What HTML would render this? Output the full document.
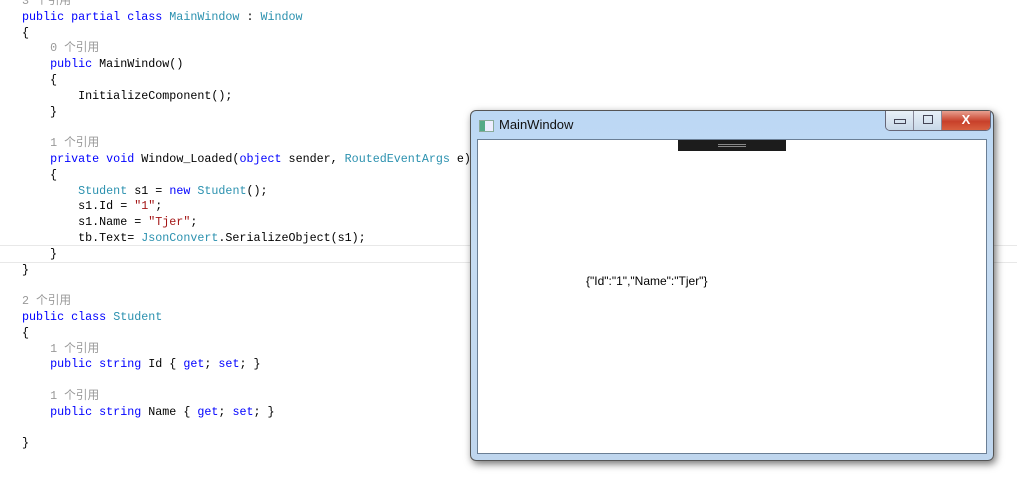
<!DOCTYPE html>
<html><head><meta charset="utf-8"><style>
body{margin:0;width:1017px;height:489px;background:#fff;overflow:hidden;position:relative;font-family:"Liberation Mono","Noto Sans CJK SC",monospace;}
.code{position:absolute;left:22px;top:-6px;font-size:11.7px;line-height:15.8px;white-space:pre;color:#000;}
.k{color:#0000ff}.t{color:#2b91af}.s{color:#a31515}.r{color:#999;font-family:"Liberation Mono","Noto Sans CJK SC",monospace}
.hl{position:absolute;left:0;top:245px;width:1017px;height:16px;border-top:1px solid #e8e8e8;border-bottom:1px solid #e8e8e8;}
.win{position:absolute;left:470px;top:110px;width:522px;height:349px;border-radius:6px;background:linear-gradient(#bcd8f4,#c6dcf2 40%,#bfd6ee);border:1px solid #555;box-shadow:2px 3px 8px rgba(0,0,0,.55);}
.client{position:absolute;left:6px;top:28px;width:508px;height:313px;background:#fff;border:1px solid #6b7f95;}
.title{position:absolute;left:28px;top:6px;font-family:"Liberation Sans",sans-serif;font-size:13px;color:#111;}
.ico{position:absolute;left:8px;top:9px;width:13px;height:10px;border:1px solid #8a9;background:linear-gradient(90deg,#5a8 0 40%,#eef 40%);}
.btns{position:absolute;left:414px;top:0;width:104px;height:19px;border:1px solid #667;border-top:none;border-radius:0 0 5px 5px;overflow:hidden;display:flex;}
.b{width:27px;height:19px;background:linear-gradient(#e8f0f8,#c8d8e8);border-right:1px solid #889;position:relative}
.bx{flex:1;background:linear-gradient(#e8a090,#c8402a 55%,#d86040);color:#fff;font:bold 13px "Liberation Sans",sans-serif;text-align:center;line-height:17px}
.bar{position:absolute;left:207px;top:29px;width:108px;height:11px;background:#1c1c1c;}
.bar:after{content:"";position:absolute;left:40px;top:4px;width:28px;border-top:1px solid #888;border-bottom:1px solid #888;height:1px}
.json{position:absolute;left:115px;top:163px;font-family:"Liberation Sans",sans-serif;font-size:12px;color:#000}
</style></head><body>
<div class="hl"></div>
<div class="code"><span class="r">3 个引用</span>
<span class="k">public partial class</span> <span class="t">MainWindow</span> : <span class="t">Window</span>
{
    <span class="r">0 个引用</span>
    <span class="k">public</span> MainWindow()
    {
        InitializeComponent();
    }

    <span class="r">1 个引用</span>
    <span class="k">private void</span> Window_Loaded(<span class="k">object</span> sender, <span class="t">RoutedEventArgs</span> e)
    {
        <span class="t">Student</span> s1 = <span class="k">new</span> <span class="t">Student</span>();
        s1.Id = <span class="s">"1"</span>;
        s1.Name = <span class="s">"Tjer"</span>;
        tb.Text= <span class="t">JsonConvert</span>.SerializeObject(s1);
    }
}

<span class="r">2 个引用</span>
<span class="k">public class</span> <span class="t">Student</span>
{
    <span class="r">1 个引用</span>
    <span class="k">public string</span> Id { <span class="k">get</span>; <span class="k">set</span>; }

    <span class="r">1 个引用</span>
    <span class="k">public string</span> Name { <span class="k">get</span>; <span class="k">set</span>; }

}</div>
<div class="win">
<div class="ico"></div>
<div class="title">MainWindow</div>
<div class="btns"><div class="b"><div style="position:absolute;left:8px;top:8px;width:10px;height:3px;border:1px solid #445"></div></div><div class="b"><div style="position:absolute;left:9px;top:4px;width:8px;height:7px;border:1px solid #445"></div></div><div class="bx">X</div></div>
<div class="client"></div>
<div class="bar"></div>
<div class="json">{"Id":"1","Name":"Tjer"}</div>
</div>
</body></html>
